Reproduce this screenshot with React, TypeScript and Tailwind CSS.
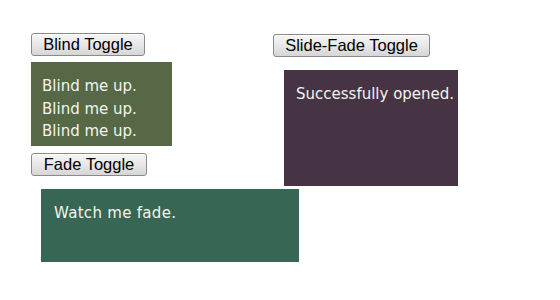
const btn =
  "h-[23px] px-0 rounded-[3px] border border-[#8a8a8a] bg-gradient-to-b from-[#f6f6f6] via-[#e8e8e8] to-[#d6d6d6] text-[16.5px] leading-none text-black font-['Liberation_Sans',Arial,sans-serif] shadow-[inset_0_1px_0_#ffffff]";

const boxText = "text-[15px] text-[#f4f4ee] font-['DejaVu_Sans',Verdana,sans-serif]";

export default function App() {
  return (
    <div className="w-[560px] h-[300px] bg-white flex">
      {/* Left column */}
      <div className="w-[273px] pl-[31px] pt-[33px] flex flex-col items-start">
        <button className={`${btn} w-[114px]`}>Blind Toggle</button>
        <div className={`mt-[6px] w-[141px] h-[84px] bg-[#566846] pl-[11px] pt-[13px] leading-[22.5px] ${boxText}`}>
          <div>Blind me up.</div>
          <div>Blind me up.</div>
          <div>Blind me up.</div>
        </div>
        <button className={`${btn} w-[116px] mt-[7px]`}>Fade Toggle</button>
        <div className={`mt-[13px] ml-[10px] w-[258px] h-[73px] bg-[#376654] pl-[13px] pt-[13px] leading-[22px] tracking-[0.3px] ${boxText}`}>
          Watch me fade.
        </div>
      </div>
      {/* Right column */}
      <div className="pt-[34px] flex flex-col items-start">
        <button className={`${btn} w-[157px]`}>Slide-Fade Toggle</button>
        <div className={`mt-[13px] ml-[11px] w-[174px] h-[116px] bg-[#463344] pl-[12px] pt-[13px] leading-[22px] whitespace-nowrap ${boxText}`}>
          Successfully opened.
        </div>
      </div>
    </div>
  );
}
